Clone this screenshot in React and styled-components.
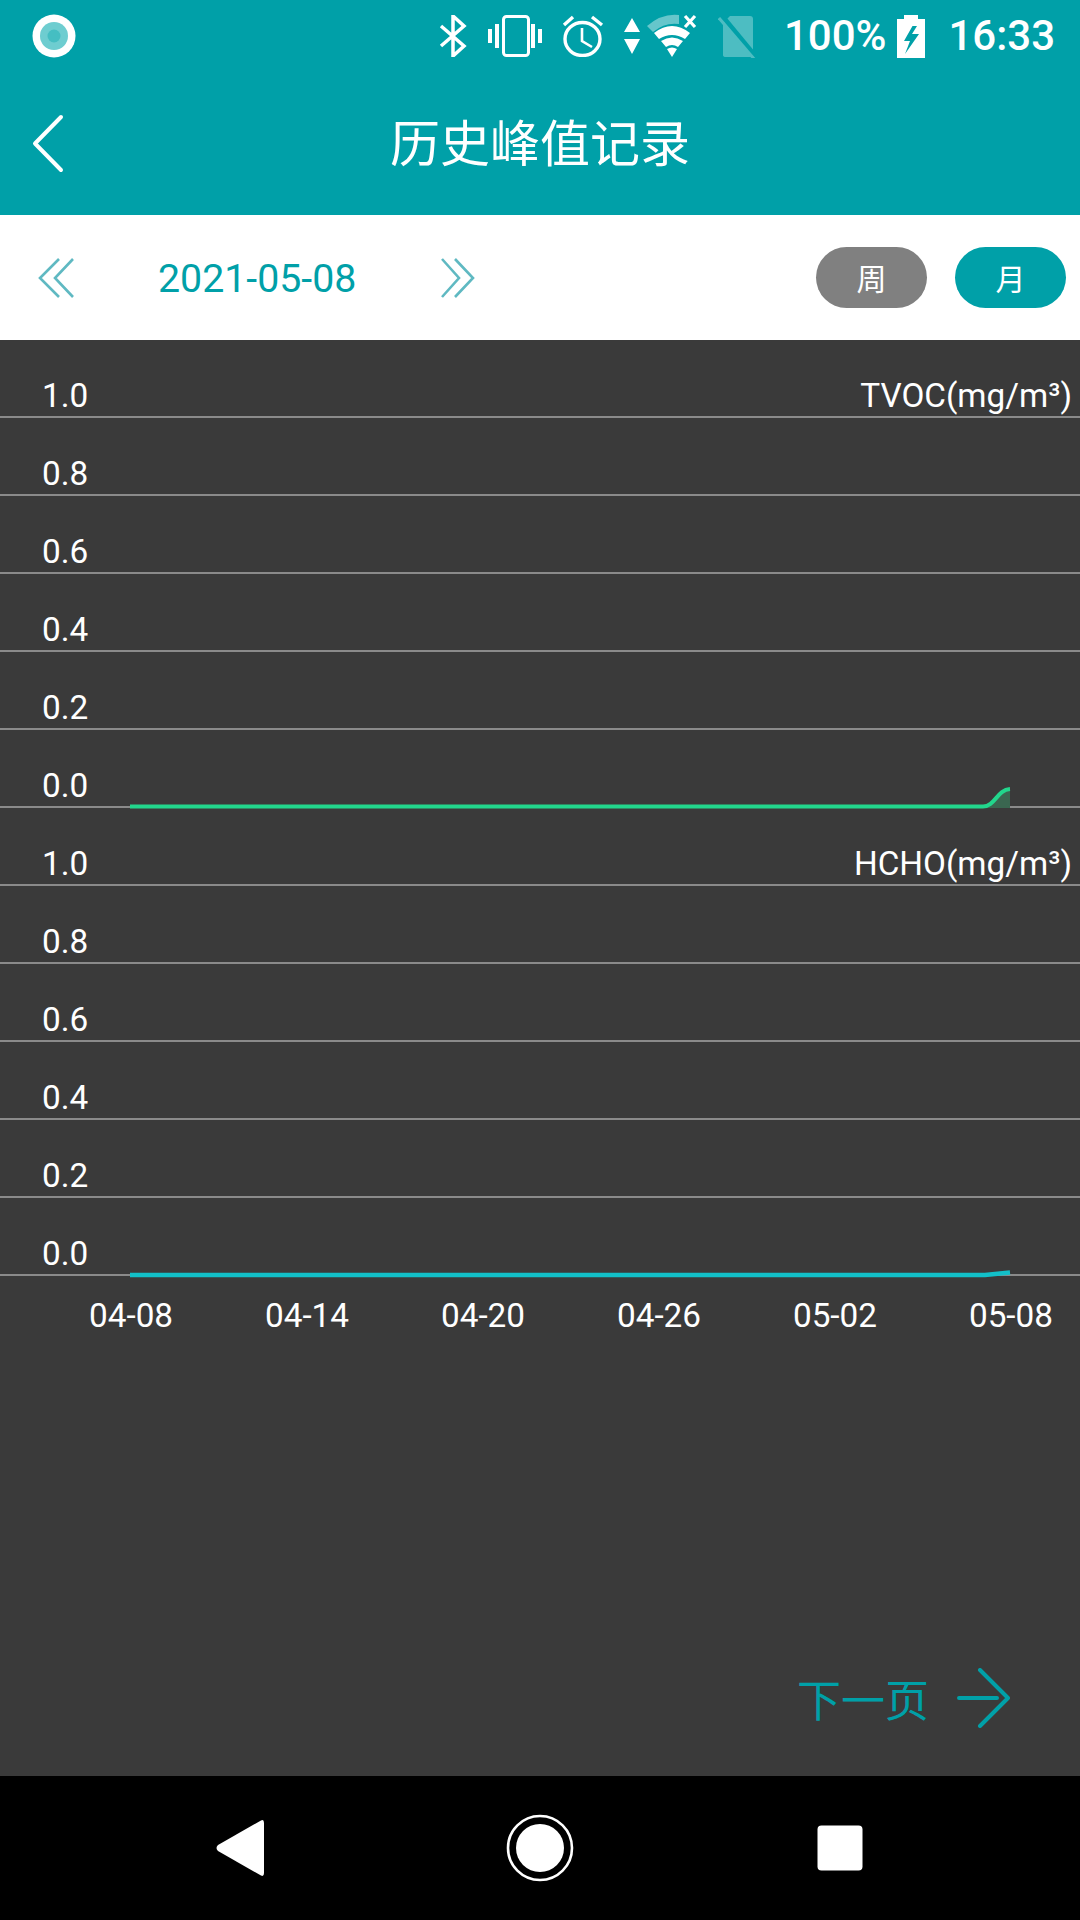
import React from "react";
import styled, { createGlobalStyle } from "styled-components";

const Global = createGlobalStyle`
  html, body { margin: 0; padding: 0; background: #3a3a3a; }
  * { box-sizing: border-box; }
`;

const TEAL = "#00a0a8";
const ROBOTO = `Roboto, "Noto Sans CJK SC", sans-serif`;
const CJK = `"Noto Sans CJK SC", Roboto, sans-serif`;

const Page = styled.div`
  width: 1080px;
  height: 1920px;
  display: flex;
  flex-direction: column;
  overflow: hidden;
  font-family: ${ROBOTO};
`;
const Header = styled.header`
  height: 215px;
  background: ${TEAL};
  color: #fff;
  display: flex;
  flex-direction: column;
`;
const StatusBar = styled.div`
  height: 72px;
  display: flex;
  align-items: center;
  padding: 0 25px 0 32px;
`;
const StatusIcon = styled.svg`
  display: block;
  flex: none;
  margin-left: ${(p) => p.$ml || 0}px;
`;
const StatusSpacer = styled.div`
  flex: 1;
`;
const StatusText = styled.span`
  font-size: 42px;
  font-weight: 500;
  line-height: 48px;
  margin-left: ${(p) => p.$ml || 0}px;
`;
const Toolbar = styled.div`
  height: 143px;
  display: grid;
  grid-template-columns: 1fr auto 1fr;
  align-items: center;
  padding: 0 32px;
`;
const Title = styled.h1`
  margin: -7px 0 0;
  font-family: ${CJK};
  font-size: 50px;
  font-weight: 400;
  line-height: 60px;
`;
const DateBar = styled.div`
  height: 125px;
  background: #fff;
  display: flex;
  align-items: center;
  padding: 0 14px 0 38px;
`;
const DateText = styled.span`
  font-size: 39.3px;
  line-height: 46px;
  color: ${TEAL};
  margin: 3px 0 0 84px;
  width: 283px;
`;
const PeriodGroup = styled.div`
  margin-left: auto;
  display: flex;
  gap: 28px;
`;
const PeriodButton = styled.button`
  width: 111px;
  height: 61px;
  border: 0;
  padding: 0;
  border-radius: 31px;
  background: ${(p) => (p.$active ? TEAL : "#808080")};
  color: #fff;
  font-family: ${CJK};
  font-size: 30px;
  line-height: 61px;
`;
const ChartPanel = styled.main`
  flex: 1;
  background: #3a3a3a;
  display: flex;
  flex-direction: column;
  color: #fff;
`;
const Chart = styled.div`
  position: relative;
`;
const GridRow = styled.div`
  height: 78px;
  border-bottom: 2px solid #8a8a8a;
  display: flex;
  justify-content: space-between;
  align-items: flex-end;
  padding: 0 8px 0 42px;
  font-size: 33.3px;
  line-height: 40px;
`;
const Traces = styled.svg`
  position: absolute;
  left: 0;
  top: 0;
`;
const XAxis = styled.div`
  display: flex;
  justify-content: space-between;
  padding: 20px 27px 0 89px;
  font-size: 33.3px;
  line-height: 40px;
`;
const Pager = styled.div`
  margin-top: auto;
  display: flex;
  align-items: center;
  justify-content: flex-end;
  gap: 28px;
  padding: 0 69px 48px 0;
  color: ${TEAL};
`;
const PagerText = styled.span`
  font-family: ${CJK};
  font-size: 44px;
  line-height: 58px;
`;
const SystemNav = styled.nav`
  height: 144px;
  background: #000;
  display: grid;
  grid-template-columns: repeat(3, 1fr);
  justify-items: center;
  align-items: center;
  padding: 0 90px;
`;

const Bluetooth = () => (
  <StatusIcon $ml={0} width="30" height="42" viewBox="0 0 30 42" fill="none" stroke="#fff" strokeWidth="3.5">
    <path d="M3 11 L26 31 L15 41 L15 1 L26 11 L3 31" />
  </StatusIcon>
);
const Vibrate = () => (
  <StatusIcon $ml={20} width="54" height="42" viewBox="0 0 54 42" fill="#fff">
    <rect x="15.5" y="1.5" width="25" height="39" rx="3" fill="none" stroke="#fff" strokeWidth="3" />
    <rect x="0" y="14" width="4" height="14" />
    <rect x="7" y="9" width="4" height="24" />
    <rect x="43" y="9" width="4" height="24" />
    <rect x="50" y="14" width="4" height="14" />
  </StatusIcon>
);
const Alarm = () => (
  <StatusIcon $ml={20} width="42" height="42" viewBox="0 0 42 42" fill="none" stroke="#fff" strokeWidth="3.4">
    <ellipse cx="20.5" cy="24" rx="17.5" ry="16.5" />
    <path d="M20 13 V26 L30 32" strokeWidth="2.6" />
    <path d="M2 10 L11 2 M30 2 L40 10" />
  </StatusIcon>
);
const Arrows = () => (
  <StatusIcon $ml={20} width="16" height="36" viewBox="0 0 16 36" fill="#fff">
    <path d="M8 0 L16 14 H0 Z M0 21 H16 L8 36 Z" />
  </StatusIcon>
);
const Wifi = () => (
  <StatusIcon $ml={7} width="50" height="44" viewBox="0 0 50 44" fill="#fff">
    <path d="M0 12 Q15 -1 32 1 L32 10 Q18 8 6 18 Z" opacity="0.4" />
    <path d="M7 19 Q25 5 43 19 L38 25 Q25 17 12 25 Z" />
    <path d="M14 27 Q25 20 36 27 L31 33 Q25 29 19 33 Z" />
    <path d="M20 35 Q25 32 30 35 L25 43 Z" />
    <path d="M38 2 L48 13 M48 2 L38 13" stroke="#fff" strokeWidth="3.2" />
  </StatusIcon>
);
const NoSim = () => (
  <StatusIcon $ml={21} width="40" height="43" viewBox="0 0 40 43">
    <path d="M12 1 H32 Q35 1 35 4 V40 Q35 42 32 42 H8 Q5 42 5 40 V8 Z" fill="#4dbdc2" />
    <path d="M5 2 L38 42" stroke={TEAL} strokeWidth="5" />
    <path d="M1 3 L37 45" stroke="#4dbdc2" strokeWidth="3" />
  </StatusIcon>
);
const Battery = () => (
  <StatusIcon $ml={11} width="28" height="43" viewBox="0 0 28 43">
    <path
      fill="#fff"
      fillRule="evenodd"
      d="M7 0 H21 V4 H28 V43 H0 V4 H7 Z M15.5 11 L7 26 H13 L8 39 L22 19 H15 L20 11 Z"
    />
  </StatusIcon>
);

const ChevronsLeft = () => (
  <svg width="36" height="40" viewBox="0 0 36 40" fill="none" stroke="#5fb9c2" strokeWidth="2.6" style={{ display: "block" }}>
    <path d="M35 1 L17 20 L35 39 M21 1 L2 20 L21 39" />
  </svg>
);
const ChevronsRight = () => (
  <svg width="36" height="40" viewBox="0 0 36 40" fill="none" stroke="#5fb9c2" strokeWidth="2.6" style={{ display: "block" }}>
    <path d="M1 1 L18 20 L1 39 M14 1 L32 20 L14 39" />
  </svg>
);

const YTicks = ["1.0", "0.8", "0.6", "0.4", "0.2", "0.0"];
const units = ["TVOC(mg/m³)", "HCHO(mg/m³)"];
const dates = ["04-08", "04-14", "04-20", "04-26", "05-02", "05-08"];

export default function App() {
  return (
    <Page>
      <Global />
      <Header>
        <StatusBar>
          <svg width="44" height="44" viewBox="0 0 44 44" style={{ display: "block" }}>
            <circle cx="22" cy="22" r="21.5" fill="#fff" />
            <circle cx="22" cy="22" r="14" fill="#6ecdd0" />
            <circle cx="22" cy="22" r="6.5" fill="#45bec2" />
          </svg>
          <StatusSpacer />
          <Bluetooth />
          <Vibrate />
          <Alarm />
          <Arrows />
          <Wifi />
          <NoSim />
          <StatusText $ml={26}>100%</StatusText>
          <Battery />
          <StatusText $ml={23}>16:33</StatusText>
        </StatusBar>
        <Toolbar>
          <svg width="34" height="60" viewBox="0 0 34 60" fill="none" stroke="#fff" strokeWidth="4" strokeLinecap="round" strokeLinejoin="round" style={{ display: "block" }}>
            <path d="M29 3 L3 29.5 L29 56" />
          </svg>
          <Title>历史峰值记录</Title>
        </Toolbar>
      </Header>
      <DateBar>
        <ChevronsLeft />
        <DateText>2021-05-08</DateText>
        <ChevronsRight />
        <PeriodGroup>
          <PeriodButton>周</PeriodButton>
          <PeriodButton $active>月</PeriodButton>
        </PeriodGroup>
      </DateBar>
      <ChartPanel>
        <Chart>
          {units.map((unit) =>
            YTicks.map((tick, i) => (
              <GridRow key={unit + tick}>
                <span>{tick}</span>
                {i === 0 && <span>{unit}</span>}
              </GridRow>
            ))
          )}
          <Traces width="1080" height="940" viewBox="0 0 1080 940" fill="none">
            <path d="M985 467 C995 467 998 450 1010 449 V468 H985 Z" fill="#3a6650" />
            <path d="M130 466.5 H983 C995 466.5 997 450 1010 449" stroke="#22d68c" strokeWidth="4" />
            <path d="M130 935 H985 L1010 932.5" stroke="#12c0c8" strokeWidth="4.5" />
          </Traces>
        </Chart>
        <XAxis>
          {dates.map((d) => (
            <span key={d}>{d}</span>
          ))}
        </XAxis>
        <Pager>
          <PagerText>下一页</PagerText>
          <svg width="54" height="60" viewBox="0 0 54 60" fill="none" stroke={TEAL} strokeWidth="4" strokeLinecap="round" strokeLinejoin="round" style={{ display: "block" }}>
            <path d="M2 30 H40 M23 2 L51 30 L23 58" />
          </svg>
        </Pager>
      </ChartPanel>
      <SystemNav>
        <svg width="50" height="58" viewBox="0 0 50 58" style={{ display: "block" }}>
          <path d="M46 1.5 Q49 0 49 4 V54 Q49 58 46 56.5 L3 32 Q0 29 3 26 Z" fill="#fff" />
        </svg>
        <svg width="68" height="68" viewBox="0 0 68 68" style={{ display: "block" }}>
          <circle cx="34" cy="34" r="32" fill="none" stroke="#fff" strokeWidth="2.6" />
          <circle cx="34" cy="34" r="24" fill="#fff" />
        </svg>
        <svg width="46" height="46" viewBox="0 0 46 46" style={{ display: "block" }}>
          <rect x="0.5" y="0.5" width="45" height="45" rx="4" fill="#fff" />
        </svg>
      </SystemNav>
    </Page>
  );
}
